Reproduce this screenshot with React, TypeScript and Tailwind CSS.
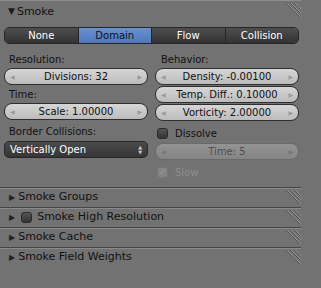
import React from 'react';

const tabs = ['None', 'Domain', 'Flow', 'Collision'];

function Grip({ className = '' }: { className?: string }) {
  return (
    <svg className={`absolute right-0 top-[2px] ${className}`} width="17" height="16" viewBox="0 0 17 16">
      {[0, 4, 8].map((o) => (
        <g key={o}>
          <line x1={2 + o} y1={0} x2={16} y2={14 - o} stroke="#525252" strokeWidth="1" />
          <line x1={3 + o} y1={0} x2={17} y2={14 - o} stroke="#959595" strokeWidth="1" />
        </g>
      ))}
    </svg>
  );
}

function Slider({ label, disabled = false }: { label: string; disabled?: boolean }) {
  return (
    <div
      className={`relative h-[17px] rounded-[8px] border flex items-center justify-center text-[10px] ${
        disabled
          ? 'border-[#6a6a6a] bg-gradient-to-b from-[#939393] to-[#858585] text-[#4e4e4e]'
          : 'border-[#2e2e2e] bg-gradient-to-b from-[#d6d6d6] to-[#bcbcbc] text-[#111]'
      }`}
    >
      <span className={`absolute left-[5px] text-[6px] ${disabled ? 'text-[#777]' : 'text-[#9a9a9a]'}`}>◀</span>
      <span>{label}</span>
      <span className={`absolute right-[5px] text-[6px] ${disabled ? 'text-[#777]' : 'text-[#9a9a9a]'}`}>▶</span>
    </div>
  );
}

function SubPanel({ title, checkbox = false }: { title: string; checkbox?: boolean }) {
  return (
    <div className="relative h-[20px] border-t border-[#454545] flex items-center">
      <div className="absolute top-0 left-0 w-full h-px bg-[#8a8a8a]" />
      <span className="ml-[9px] text-[8px] text-[#222]">▶</span>
      {checkbox && <span className="ml-[6px] w-[11px] h-[11px] rounded-[3px] bg-gradient-to-b from-[#555] to-[#333] border border-[#2a2a2a]" />}
      <span className={`${checkbox ? 'ml-[5px]' : 'ml-[3px]'} text-[11px] text-[#111]`}>{title}</span>
      <Grip />
    </div>
  );
}

export default function App() {
  return (
    <div className="w-[321px] h-[288px] bg-[#727272] overflow-hidden font-['DejaVu_Sans',sans-serif]">
      <div className="w-[301px]">
        <div className="relative h-[23px] border-t border-[#8e8e8e] flex items-center">
          <span className="ml-[8px] text-[9px] text-[#1a1a1a]">▼</span>
          <span className="ml-[2px] text-[11px] text-[#111]">Smoke</span>
          <Grip />
        </div>

        <div className="px-[4px] pr-[2px]">
          <div className="mt-[4px] h-[17px] flex rounded-[5px] overflow-hidden border border-[#262626] text-[10px]">
            {tabs.map((t, i) => (
              <div
                key={t}
                className={`flex-1 flex items-center justify-center ${i > 0 ? 'border-l border-[#262626]' : ''} ${
                  t === 'Domain'
                    ? 'bg-gradient-to-b from-[#6791d3] to-[#4f78ba] text-[#111]'
                    : 'bg-gradient-to-b from-[#4e4e4e] to-[#333] text-white'
                }`}
              >
                {t}
              </div>
            ))}
          </div>

          <div className="grid grid-cols-2 gap-x-[7px] mt-[6px]">
            <div className="flex flex-col">
              <div className="h-[18px] pl-[5px] flex items-center text-[10px] text-[#111]">Resolution:</div>
              <Slider label="Divisions: 32" />
              <div className="h-[18px] pl-[5px] flex items-center text-[10px] text-[#111]">Time:</div>
              <Slider label="Scale: 1.00000" />
              <div className="h-[21px] pl-[5px] pt-[2px] flex items-center text-[10px] text-[#111]">Border Collisions:</div>
              <div className="h-[17px] rounded-[5px] border border-[#262626] bg-gradient-to-b from-[#4a4a4a] to-[#363636] flex items-center justify-between px-[5px] text-[10px] text-white">
                <span>Vertically Open</span>
                <span className="flex flex-col text-[5px] leading-[5px] text-[#ccc]">
                  <span>▲</span>
                  <span>▼</span>
                </span>
              </div>
            </div>
            <div className="flex flex-col">
              <div className="h-[18px] pl-[6px] flex items-center text-[10px] text-[#111]">Behavior:</div>
              <Slider label="Density: -0.00100" />
              <div className="h-[1px]" />
              <Slider label="Temp. Diff.: 0.10000" />
              <div className="h-[1px]" />
              <Slider label="Vorticity: 2.00000" />
              <div className="h-[22px] pl-[2px] pt-[3px] flex items-center gap-[7px] text-[10px] text-[#111]">
                <span className="w-[11px] h-[11px] rounded-[3px] bg-gradient-to-b from-[#555] to-[#333] border border-[#2a2a2a]" />
                Dissolve
              </div>
              <Slider label="Time: 5" disabled />
              <div className="h-[27px] pl-[2px] pb-[2px] flex items-center gap-[7px] text-[10px] text-[#8e8e8e]">
                <span className="w-[11px] h-[11px] rounded-[3px] bg-[#848484] border border-[#777] flex items-center justify-center text-[9px] leading-none text-[#9c9c9c]">✓</span>
                Slow
              </div>
            </div>
          </div>
        </div>

        <div>
          <SubPanel title="Smoke Groups" />
          <SubPanel title="Smoke High Resolution" checkbox />
          <SubPanel title="Smoke Cache" />
          <SubPanel title="Smoke Field Weights" />
        </div>
      </div>
    </div>
  );
}
